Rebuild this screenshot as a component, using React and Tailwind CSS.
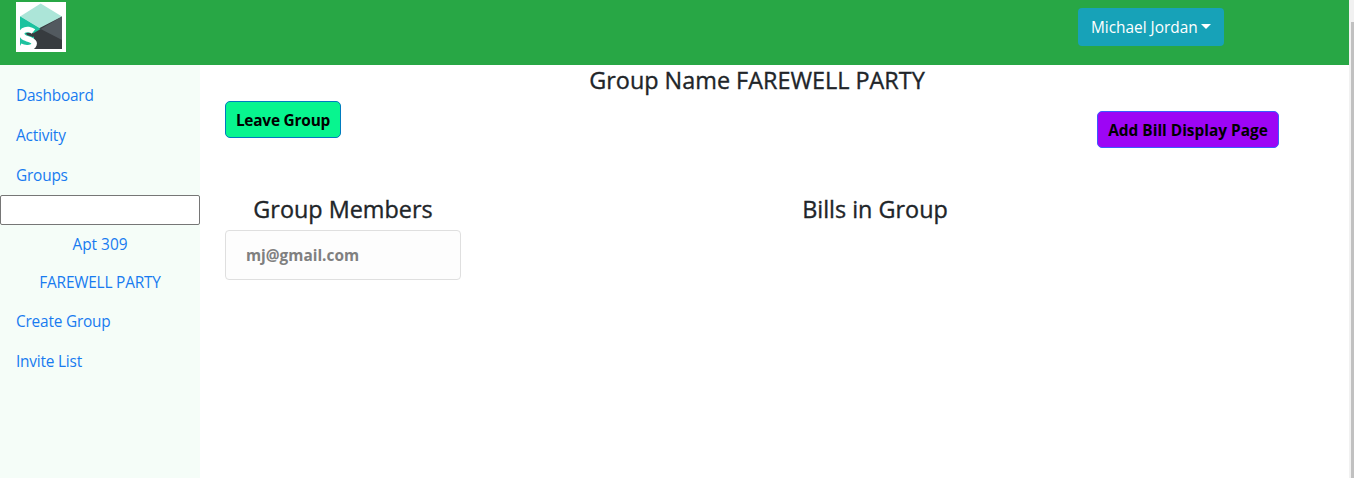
function Logo() {
  return (
    <svg viewBox="0 0 50 50" className="block size-[50px]" aria-hidden="true">
      <rect width="50" height="50" fill="#fff" />
      <path d="M4 14.500 24.700 1.500 46 14.500 24.700 27z" fill="#ace5d8" />
      <path d="M4 14.500v32.500h15V31.500L24.700 27z" fill="#1cc29f" />
      <path d="M46 14.500v32.500H18V35L12 32z" fill="#373b3f" />
      <path d="M24.700 27 4 14.500V32h12z" fill="#1cc29f" />
      <path d="M10 31 17 30.500V35l-6-2z" fill="#373b3f" />
      <path d="M46 14.500V38L24.700 27z" fill="#52595f" />
      <path d="M17.500 29.500C15 27.500 10.500 26.500 7.500 28.500 4 31.500 6 35 10.500 36.500c5 1.500 8.500 3 7.500 6-1.500 4-9.500 4-14 1.500" fill="none" stroke="#fff" strokeWidth="5.500" />
    </svg>
  );
}

function NavLink({ children }) {
  return <a className="block h-10 px-4 pt-[9px]">{children}</a>;
}

function Heading({ className = "", children }) {
  return (
    <h4 className={`h-[29px] text-center text-[23.400px] leading-[29px] font-medium whitespace-nowrap [-webkit-text-stroke:0.350px_#212529] ${className}`}>
      {children}
    </h4>
  );
}

export default function App() {
  return (
    <div className="flex h-[478px] overflow-hidden bg-white font-['Open_Sans',sans-serif] text-[15.400px] leading-6 text-[#212529]">
      <div className="flex min-w-0 flex-1 flex-col">
        <header className="flex h-[65px] items-start justify-between bg-[#28a745] pr-[125px] pl-4">
          <div className="pt-0.5">
            <Logo />
          </div>
          <button className="mt-2 flex h-[38px] w-[146px] items-center rounded-[4px] bg-[#17a2b8] pl-[13px] whitespace-nowrap text-white">
            <span className="w-[110px] pt-0.5 text-left">Michael Jordan</span>
            <span className="mb-0.5 size-0 border-x-[5px] border-t-[5px] border-x-transparent border-t-white" />
          </button>
        </header>
        <div className="flex min-h-0 flex-1">
          <nav className="w-[200px] shrink-0 bg-[#f5fdf8] pt-2.5 tracking-[-0.200px] text-[#187bf0]">
            <NavLink>Dashboard</NavLink>
            <NavLink>Activity</NavLink>
            <NavLink>Groups</NavLink>
            <input className="block h-[30px] w-full rounded-[2px] border border-[#767676] bg-white" />
            <a className="block h-[38px] pt-2 text-center tracking-normal">Apt 309</a>
            <a className="block h-[38px] pt-2 text-center">FAREWELL PARTY</a>
            <NavLink>Create Group</NavLink>
            <NavLink>Invite List</NavLink>
          </nav>
          <main className="flex flex-1 flex-col pl-[25px]">
            <Heading className="mt-px w-[1064px]">Group Name FAREWELL PARTY</Heading>
            <div className="mt-1.5 flex justify-between pr-[70px]">
              <button className="h-[37px] w-[116px] rounded-[5px] border border-[#007bbf] bg-[#08f58f] pt-[3px] font-bold tracking-[-0.200px] whitespace-nowrap text-black">
                Leave Group
              </button>
              <button className="mt-2.5 h-[37px] w-[182px] rounded-[5px] border border-[#3b5bff] bg-[#9d05f5] pt-[3px] font-bold whitespace-nowrap text-black">
                Add Bill Display Page
              </button>
            </div>
            <div className="mt-[47px] flex">
              <section className="w-[236px]">
                <Heading>Group Members</Heading>
                <div className="mt-1.5 h-[50px] rounded-[4px] border border-[#dfdfdf] bg-[#fdfdfd] px-5 pt-[13px] font-bold text-[#808080]">
                  mj@gmail.com
                </div>
              </section>
              <section className="ml-[296px] w-[236px]">
                <Heading>Bills in Group</Heading>
              </section>
            </div>
          </main>
        </div>
      </div>
      <div className="flex w-[5px] flex-col bg-[#f1f1f1] pt-[22px] pl-0.5">
        <div className="flex-1 bg-[#c1c1c1]" />
      </div>
    </div>
  );
}
